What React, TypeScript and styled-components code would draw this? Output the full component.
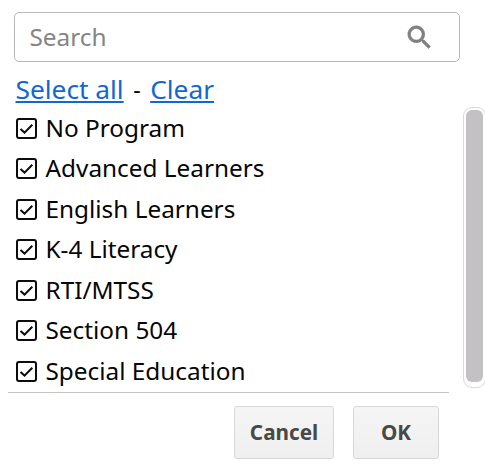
import React, { useState } from "react";
import styled, { createGlobalStyle } from "styled-components";

const GlobalStyle = createGlobalStyle`
  * { box-sizing: border-box; }
  body { margin: 0; background: #fff; overflow: hidden; font-family: "Noto Sans", sans-serif; }
`;

const Panel = styled.main`
  width: 485px;
  height: 467px;
  padding-top: 12px;
  display: flex;
  flex-direction: column;
  background: #fff;
  color: #060606;
`;

const SearchBox = styled.label`
  display: flex;
  align-items: center;
  width: 446px;
  height: 50px;
  margin-left: 14px;
  padding: 0 24px 0 14.5px;
  border: 1px solid #b8b8b8;
  border-radius: 5px;
`;

const SearchInput = styled.input`
  flex: 1;
  min-width: 0;
  padding: 0;
  border: 0;
  outline: 0;
  background: transparent;
  font: 24.35px/34px "Noto Sans", sans-serif;
  color: #222;
  &::placeholder { color: #858585; opacity: 1; }
`;

const SearchIcon = styled.svg`
  width: 31px;
  height: 31px;
  fill: #808080;
  stroke: #808080;
  stroke-width: 0.5;
`;

const Links = styled.div`
  display: flex;
  align-items: center;
  height: 45px;
  padding: 9px 0 0 15.5px;
  font-size: 26.3px;
  line-height: 36px;
  white-space: pre;
`;

const Link = styled.a`
  color: #1267d3;
  text-decoration: underline;
  text-decoration-thickness: 2px;
  text-underline-offset: 2px;
`;

const Dash = styled.span`
  width: 26.5px;
  font-size: 23px;
  text-align: center;
`;

const ListArea = styled.section`
  display: flex;
  justify-content: space-between;
  height: 285px;
`;

const Options = styled.div`
  width: 441px;
  margin-left: 8px;
  padding: 0.7px 0 0 8px;
  border-bottom: 1px solid #c4c4c4;
  height: 286px;
`;

const Option = styled.label`
  display: flex;
  align-items: center;
  gap: 8.5px;
  height: 40.45px;
  font-size: 24.35px;
  line-height: 34px;
`;

const CheckIcon = styled.svg`
  width: 21px;
  height: 21px;
  margin-top: 1px;
  flex: none;
  fill: none;
  stroke: #0c0c0c;
`;

const ScrollTrack = styled.div`
  width: 23px;
  height: 281px;
  margin-right: -1px;
  padding: 2px;
  border: 1px solid #d9d9d9;
  border-radius: 9px;
`;

const ScrollThumb = styled.div`
  height: 272px;
  width: 17px;
  border-radius: 6px;
  background: #c3c1c4;
`;

const Footer = styled.footer`
  display: flex;
  gap: 19px;
  padding: 14px 0 0 234px;
`;

const Button = styled.button<{ $width: number }>`
  width: ${({ $width }) => $width}px;
  height: 53px;
  padding: 0 0 2px;
  border: 1px solid #d7d7d7;
  border-radius: 3px;
  background: linear-gradient(#f5f5f5, #efefef);
  color: #484848;
  font: 700 20.7px/28px "Noto Sans", sans-serif;
`;

const programs = [
  "No Program", "Advanced Learners", "English Learners", "K-4 Literacy",
  "RTI/MTSS", "Section 504", "Special Education",
];

export default function App() {
  const [query, setQuery] = useState("");
  return (
    <>
      <GlobalStyle />
      <Panel>
        <SearchBox>
          <SearchInput placeholder="Search" value={query} onChange={(e) => setQuery(e.target.value)} />
          <SearchIcon viewBox="0 0 24 24">
            <path d="M15.5 14h-.79l-.28-.27A6.5 6.5 0 1 0 13.73 14.43l.27.28v.79l5 4.99L20.49 19zM9.5 14a4.5 4.5 0 1 1 0-9 4.5 4.5 0 0 1 0 9z" />
          </SearchIcon>
        </SearchBox>
        <Links>
          <Link href="#all">Select all</Link>
          <Dash>-</Dash>
          <Link href="#clear">Clear</Link>
        </Links>
        <ListArea>
          <Options>
            {programs.map((name) => (
              <Option key={name}>
                <CheckIcon viewBox="0 0 21 21">
                  <rect x="1" y="1" width="19" height="19" rx="2" strokeWidth="2" />
                  <path d="M4.5 11 8.5 14.6 16.3 6.7" strokeWidth="2" />
                </CheckIcon>
                {name}
              </Option>
            ))}
          </Options>
          <ScrollTrack><ScrollThumb /></ScrollTrack>
        </ListArea>
        <Footer>
          <Button $width={100}>Cancel</Button>
          <Button $width={86}>OK</Button>
        </Footer>
      </Panel>
    </>
  );
}
